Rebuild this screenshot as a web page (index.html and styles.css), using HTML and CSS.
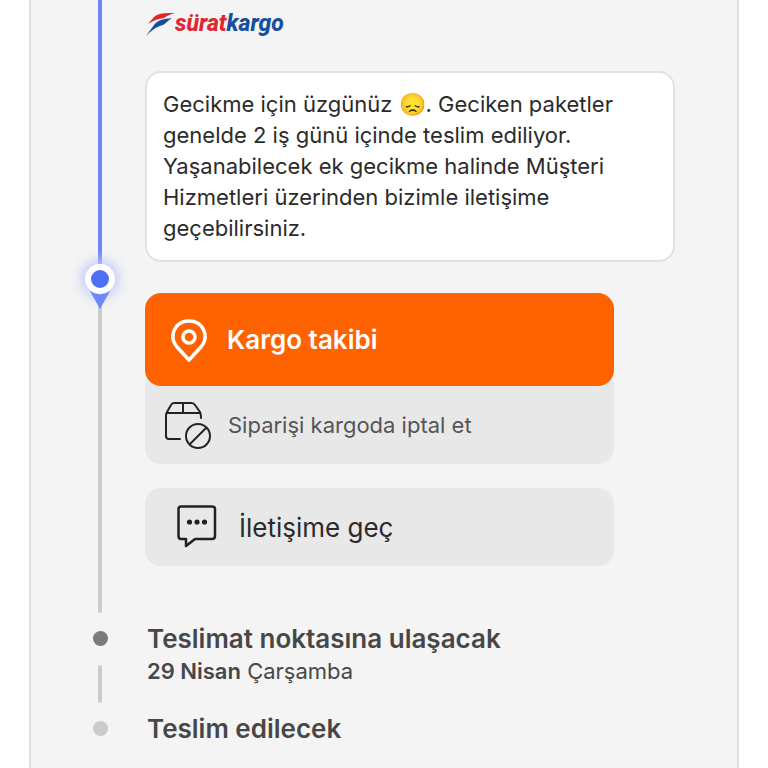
FILE: index.html
```html
<!DOCTYPE html>
<html lang="tr">
<head>
<meta charset="utf-8">
<meta name="viewport" content="width=device-width, initial-scale=1">
<title>Kargo durumu</title>
<link rel="stylesheet" href="styles.css">
</head>
<body>
<main class="panel">
  <section class="step">
    <div class="rail"><span class="line line-done"></span></div>
    <div class="content content-notice">
      <div class="carrier">
        <svg class="carrier-mark" viewBox="0 0 30 26" aria-hidden="true">
          <path fill="#e0262f" d="M3 13L9 6C13 2 20 2 30 2C25 3 22 5 19 7C12 8 8 10 3 13Z"/>
          <path fill="#15509f" d="M1 25L9 14C13 9 18 8 27 7C23 9 22 12 18 14C11 16 7 19 1 25Z"/>
        </svg>
        <span class="carrier-name"><span class="carrier-first">sürat</span><span class="carrier-last">kargo</span></span>
      </div>
      <p class="notice">Gecikme için üzgünüz 😞. Geciken paketler genelde 2 iş günü içinde teslim ediliyor. Yaşanabilecek ek gecikme halinde Müşteri Hizmetleri üzerinden bizimle iletişime geçebilirsiniz.</p>
    </div>
  </section>

  <section class="step">
    <div class="rail">
      <span class="pin"></span>
      <span class="line line-next"></span>
    </div>
    <div class="content content-actions">
      <button class="action action-track" type="button">
        <svg class="icon-track" viewBox="0 0 38 44" fill="none" stroke="#fff" stroke-width="3.5" aria-hidden="true">
          <path d="M19 42L7 29C-2 18 5 3 19 3S40 18 31 29Z"/>
          <circle cx="19" cy="19" r="6"/>
        </svg>
        Kargo takibi
      </button>
      <button class="action action-cancel" type="button">
        <svg class="icon-cancel" viewBox="0 0 48 48" fill="none" stroke="#222" stroke-width="2" stroke-linecap="round" stroke-linejoin="round" aria-hidden="true">
          <path d="M16 38H5Q2 38 2 35V15Q2 13 3 11L7 4Q8 2 10 2H27Q30 2 31 4L36 11Q37 13 37 17M3 12H36M19 2V12"/>
          <circle cx="34" cy="35" r="12"/>
          <path d="M26 43L42 27"/>
        </svg>
        Siparişi kargoda iptal et
      </button>
      <button class="action action-contact" type="button">
        <svg class="icon-contact" viewBox="0 0 40 44" fill="none" stroke="#222" stroke-width="2.5" stroke-linejoin="round" aria-hidden="true">
          <path d="M4 1.500H35Q38 1.500 38 4V31Q38 34 35 34H18L9 41V34H4Q1.500 34 1.500 31V4Q1.500 1.500 4 1.500Z"/>
          <g fill="#222" stroke="none"><circle cx="12.500" cy="17" r="2.600"/><circle cx="20" cy="17" r="2.600"/><circle cx="27.500" cy="17" r="2.600"/></g>
        </svg>
        İletişime geç
      </button>
    </div>
  </section>

  <section class="step">
    <div class="rail">
      <span class="dot"></span>
      <span class="line line-short"></span>
    </div>
    <div class="content content-status">
      <h2 class="title">Teslimat noktasına ulaşacak</h2>
      <p class="date"><strong>29 Nisan</strong> Çarşamba</p>
    </div>
  </section>

  <section class="step">
    <div class="rail"><span class="dot dot-last"></span></div>
    <div class="content content-status">
      <h2 class="title">Teslim edilecek</h2>
    </div>
  </section>
</main>
</body>
</html>
```
FILE: styles.css
```css
* {
  box-sizing: border-box;
}

body {
  margin: 0;
  background: #fff;
  font-family: Inter, "Liberation Sans", sans-serif;
  color: #2b2b2b;
}

h2,
p {
  margin: 0;
}

.panel {
  min-height: 100vh;
  margin: 0 29px;
  background: #f4f4f4;
  border: solid #dfdfe0;
  border-width: 0 2px;
}

.step {
  display: grid;
  grid-template-columns: 114px minmax(0, 1fr);
  padding-right: 62px;
}

.rail {
  display: flex;
  flex-direction: column;
  align-items: center;
  padding-left: 24px;
}

.line {
  flex: 1;
  width: 4px;
  background: #cbcbcb;
}

.line-done {
  background: #6f86fb;
}

.line-next {
  border-radius: 0 0 2px 2px;
}

.line-short {
  margin-top: 19px;
  border-radius: 2px;
}

.pin {
  position: relative;
  width: 30px;
  height: 30px;
  margin-bottom: 12px;
  border: 6px solid #fff;
  border-radius: 50%;
  background: #4f6df5;
  box-shadow: 0 0 12px 4px #c3cbfa;
}

.pin::after {
  content: "";
  position: absolute;
  top: 21px;
  left: -1px;
  width: 20px;
  height: 18px;
  background: #6f86fb;
  clip-path: polygon(0 0, 25% 14%, 50% 18%, 75% 14%, 100% 0, 50% 100%);
}

.carrier {
  display: flex;
  align-items: center;
  height: 47px;
  margin-bottom: 24px;
}

.carrier-mark {
  width: 30px;
  height: 26px;
}

.carrier-name {
  font: italic 800 23px/32px Roboto, sans-serif;
}

.carrier-first {
  color: #e0262f;
}

.carrier-last {
  color: #15509f;
}

.notice {
  padding: 16px;
  background: #fff;
  border: 2px solid #e2e2e2;
  border-radius: 16px;
  font-size: 22px;
  line-height: 31px;
}

.content-notice {
  padding-bottom: 2px;
}

.content-actions {
  display: flex;
  flex-direction: column;
  padding: 29px 61px 47px 0;
}

.action {
  display: flex;
  align-items: center;
  width: 100%;
  border: 0;
  border-radius: 16px;
  background: #e8e8e8;
  font-family: inherit;
  text-align: left;
  cursor: pointer;
}

.action-track {
  z-index: 1;
  height: 93px;
  padding: 0 25px;
  gap: 19px;
  background: #ff6200;
  color: #fff;
  font-size: 26px;
  font-weight: 600;
}

.action-cancel {
  height: 94px;
  margin-top: -16px;
  padding: 16px 19px 0;
  gap: 16px;
  color: #555;
  font-size: 22px;
}

.action-contact {
  height: 78px;
  margin-top: 24px;
  padding: 0 32px;
  gap: 22px;
  color: #2b2b2b;
  font-size: 26px;
}

.icon-track {
  width: 38px;
  height: 44px;
}

.icon-cancel {
  width: 48px;
  height: 48px;
}

.icon-contact {
  width: 40px;
  height: 44px;
}

.dot {
  width: 15px;
  height: 15px;
  margin-top: 18px;
  border-radius: 50%;
  background: #7b7b7b;
}

.dot-last {
  background: #cbcbcb;
}

.content-status {
  padding: 10px 0 16px 2px;
  color: #474747;
}

.title {
  font-size: 26px;
  font-weight: 600;
  line-height: 32px;
}

.date {
  font-size: 22px;
  line-height: 32px;
}

.date strong {
  font-weight: 600;
}
```
